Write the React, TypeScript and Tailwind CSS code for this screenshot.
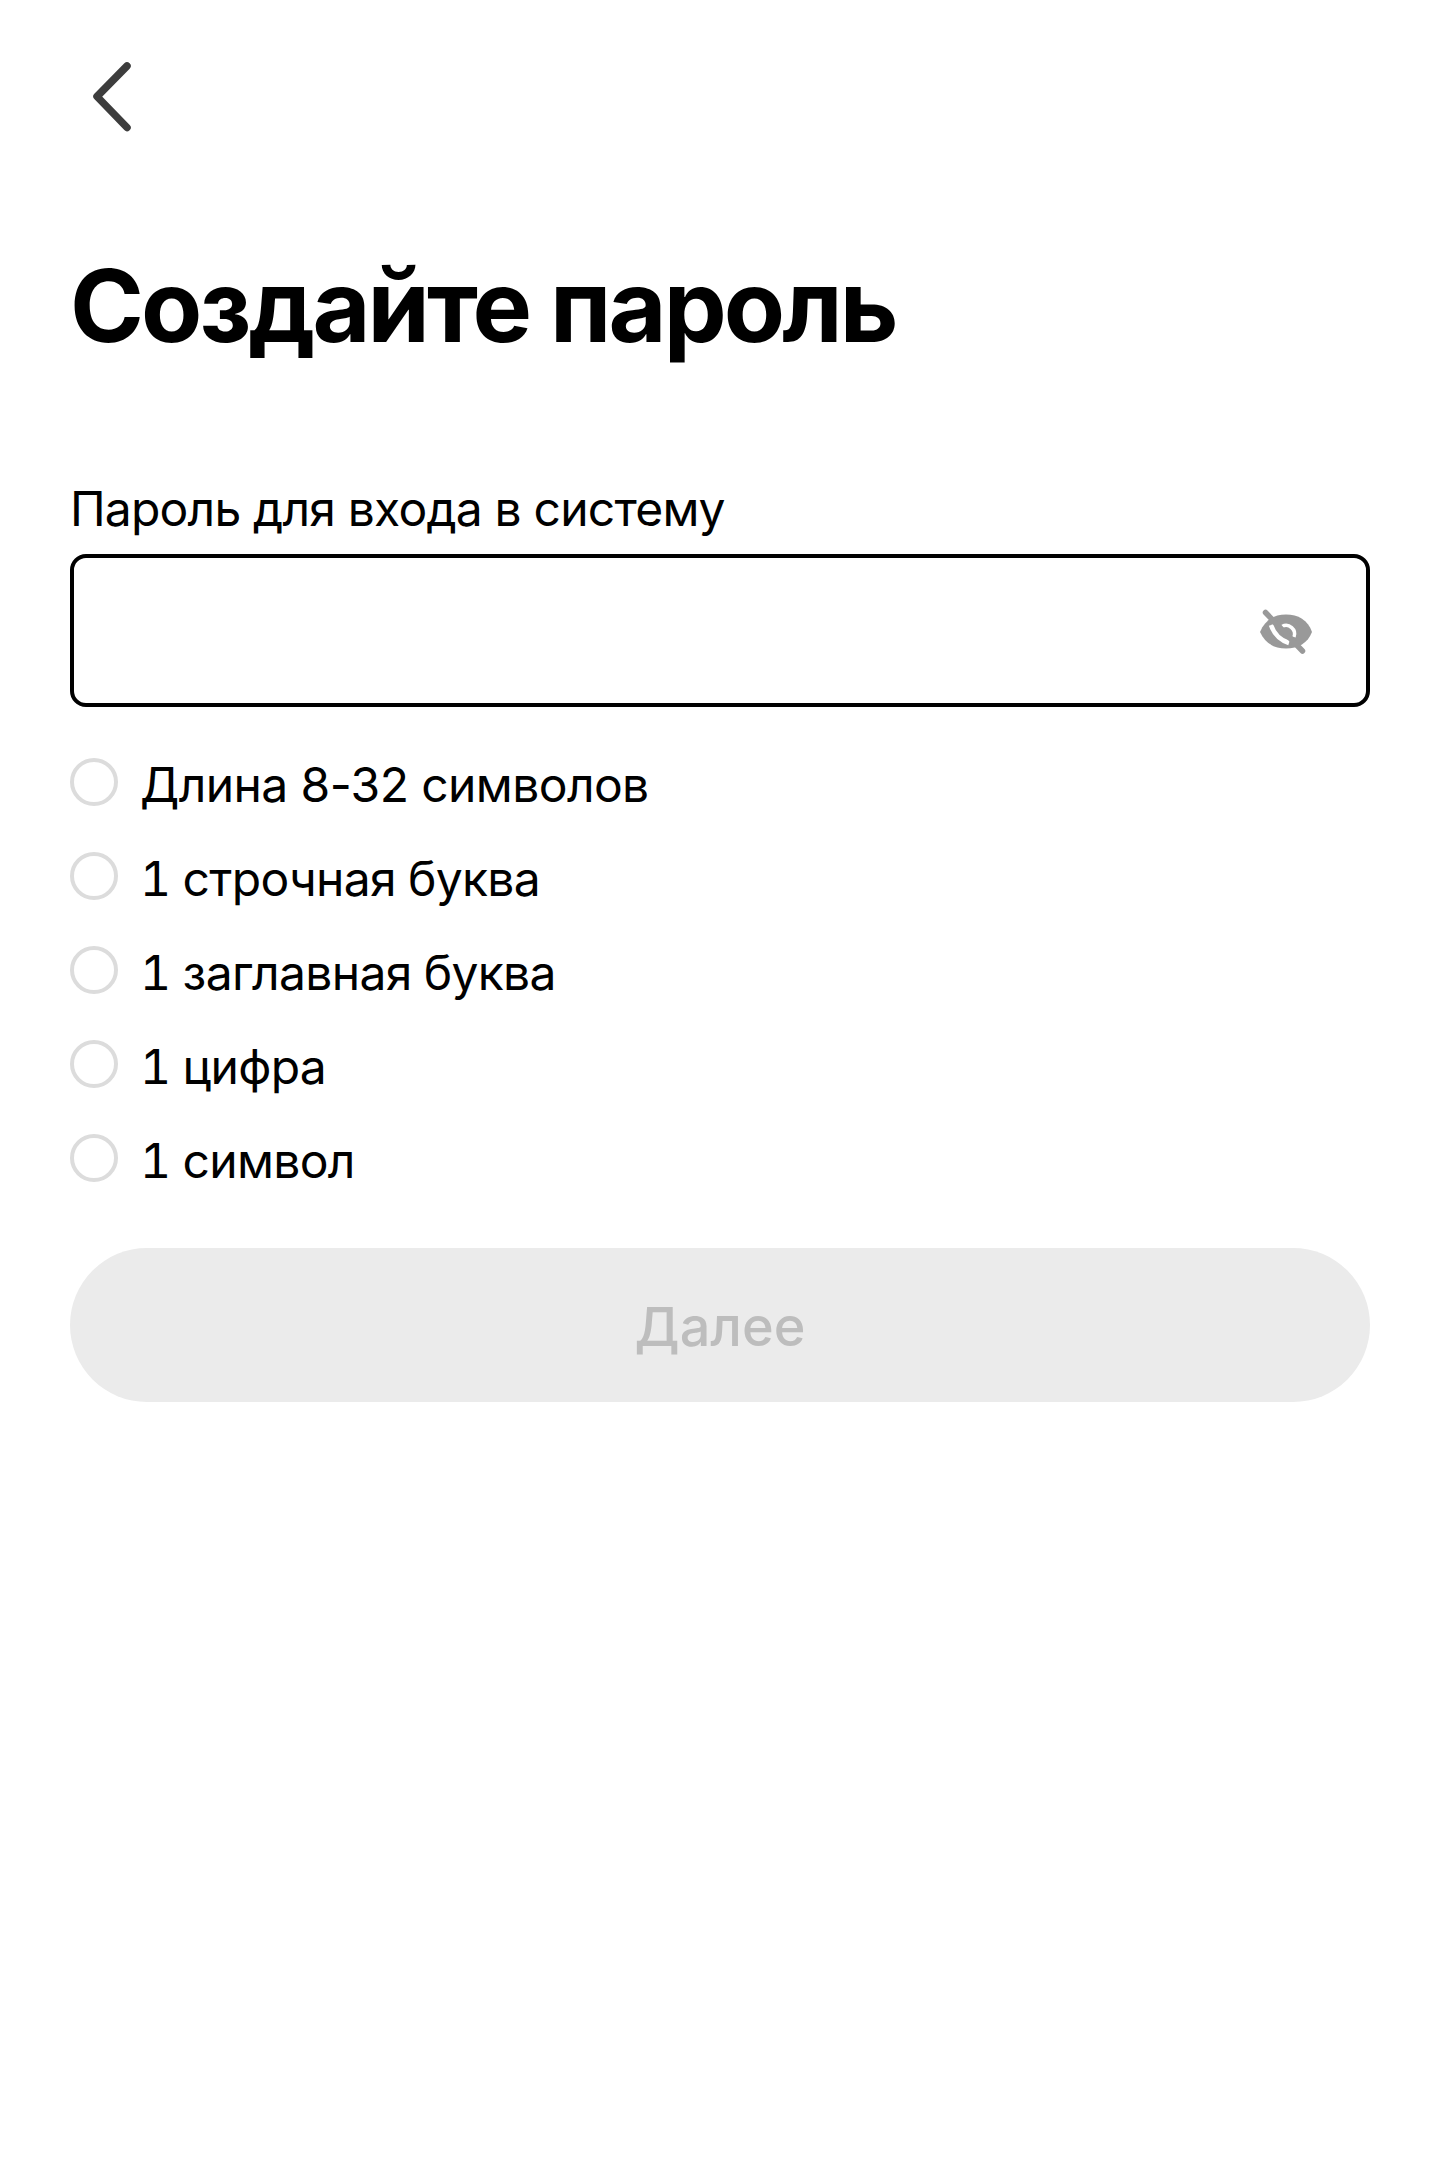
const rules = ['Длина 8-32 символов', '1 строчная буква', '1 заглавная буква', '1 цифра', '1 символ'];

function EyeOff() {
  return (
    <svg width="54" height="46" viewBox="0 0 54 46" fill="none">
      <path d="M1 24C6 12 15 6.500 27 6.500S49 12 53 24c-4 11-14 16.500-26 16.500S6 35 1 24Z" fill="#999999" />
      <path d="M23 18.500A8.500 8.500 0 0 1 35 29" stroke="#ffffff" strokeWidth="3.500" />
      <path d="M12 17c3 9 9 15 18 18" stroke="#ffffff" strokeWidth="4.500" />
      <path d="M6.500 4.500L43.500 43" stroke="#999999" strokeWidth="5.500" strokeLinecap="round" />
    </svg>
  );
}

export default function App() {
  return (
    <div className="min-h-[2159px] w-full bg-white px-[70px] text-black font-['Inter','Liberation_Sans',sans-serif]">
      {/* Back */}
      <div className="pt-[60px]">
        <svg width="44" height="76" viewBox="0 0 44 76" fill="none" className="ml-[21px] block">
          <path d="M36 6L6 36.500l30 31" stroke="#3d3d3d" strokeWidth="7.500" strokeLinecap="round" strokeLinejoin="round" />
        </svg>
      </div>

      <h1 className="mt-[110px] text-[100px] leading-[120px] font-bold tracking-[-2.9px]">Создайте пароль</h1>

      <div className="mt-[114px] text-[48px] leading-[58px] tracking-[-0.8px]">Пароль для входа в систему</div>

      {/* Password input */}
      <div className="mt-[16px] flex h-[153px] items-center justify-end rounded-[16px] border-[4px] border-black pr-[53px]">
        <EyeOff />
      </div>

      {/* Requirements */}
      <ul className="mt-[49px] flex flex-col gap-[36px]">
        {rules.map((rule) => (
          <li
            key={rule}
            className={`flex h-[58px] items-center gap-[22px] text-[48px] leading-[58px] ${
              rule.startsWith('1') ? 'tabular-nums tracking-[-0.7px]' : 'tracking-[-0.6px]'
            }`}
          >
            <span className="mt-[-6px] h-[48px] w-[48px] shrink-0 rounded-full border-[4px] border-[#dcdcdc]"></span>
            <span>{rule}</span>
          </li>
        ))}
      </ul>

      <button className="mt-[58px] flex h-[154px] w-full items-center justify-center rounded-full bg-[#ebebeb] pt-[2px] text-[54px] font-medium text-[#bdbdbd]">
        Далее
      </button>
    </div>
  );
}
